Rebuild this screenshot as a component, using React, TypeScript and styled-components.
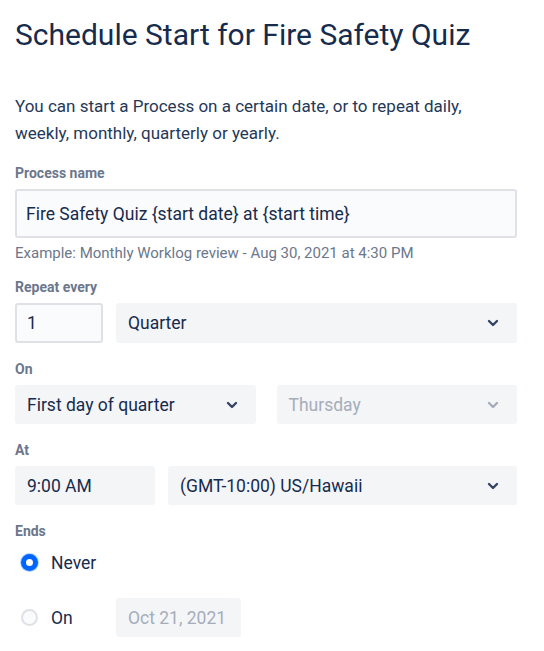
import styled, { createGlobalStyle } from 'styled-components';

const GlobalStyle = createGlobalStyle`
  body {
    margin: 0;
    background: #ffffff;
    font-family: Roboto, "Liberation Sans", sans-serif;
    color: #172b4d;
  }
`;

const Chevron = ({ disabled }: { disabled?: boolean }) => (
  <svg width="12" height="8" viewBox="0 0 12 8" aria-hidden>
    <path
      d="M2 2 L6 6 L10 2"
      fill="none"
      stroke={disabled ? '#a5adba' : '#344563'}
      strokeWidth="2.4"
      strokeLinecap="round"
      strokeLinejoin="round"
    />
  </svg>
);

const Select = ({ value, disabled }: { value: string; disabled?: boolean }) => (
  <SelectBox $disabled={disabled}>
    <span>{value}</span>
    <Chevron disabled={disabled} />
  </SelectBox>
);

const App = () => {
  return (
    <>
      <GlobalStyle />
      <Page>
        <Title>Schedule Start for Fire Safety Quiz</Title>
        <Description>
          You can start a Process on a certain date, or to repeat daily,
          weekly, monthly, quarterly or yearly.
        </Description>

        <Label>Process name</Label>
        <TextInput>Fire Safety Quiz {'{start date}'} at {'{start time}'}</TextInput>
        <Hint>Example: Monthly Worklog review - Aug 30, 2021 at 4:30 PM</Hint>

        <Label>Repeat every</Label>
        <Row $gap={13} $height={40}>
          <NumberInput>1</NumberInput>
          <Select value="Quarter" />
        </Row>

        <Label>On</Label>
        <Row $gap={21} $height={39}>
          <Select value="First day of quarter" />
          <Select value="Thursday" disabled />
        </Row>

        <Label>At</Label>
        <Row $gap={13} $height={39}>
          <TimeBox>9:00 AM</TimeBox>
          <Select value="(GMT-10:00) US/Hawaii" />
        </Row>

        <Label>Ends</Label>
        <RadioGroup>
          <RadioRow>
            <Radio $checked />
            <RadioText>Never</RadioText>
          </RadioRow>
          <RadioRow>
            <Radio />
            <RadioText>On</RadioText>
            <DateBox>Oct 21, 2021</DateBox>
          </RadioRow>
        </RadioGroup>
      </Page>
    </>
  );
};

export default App;

const Page = styled.div`
  width: 502px;
  padding: 0 15px 14px;
`;

const Title = styled.h1`
  margin: 0;
  padding-top: 17px;
  font-size: 30px;
  font-weight: 400;
  line-height: 36px;
  color: #172b4d;
`;

const Description = styled.p`
  max-width: 470px;
  margin: 40px 0 0;
  font-size: 17px;
  line-height: 27px;
  color: #253858;
`;

const Label = styled.div`
  margin: 18px 0 8px;
  font-size: 14px;
  font-weight: 700;
  line-height: 16px;
  color: #6b778c;
`;

const TextInput = styled.div`
  box-sizing: border-box;
  height: 49px;
  padding: 0 9px;
  display: flex;
  align-items: center;
  background: #fafbfc;
  border: 2px solid #dfe1e6;
  border-radius: 3px;
  font-size: 17.5px;
  color: #172b4d;
`;

const Hint = styled.div`
  margin-top: 6px;
  margin-bottom: -1px;
  font-size: 15px;
  line-height: 18px;
  color: #6b778c;
`;

const Row = styled.div<{ $gap: number; $height: number }>`
  display: flex;
  gap: ${(p) => p.$gap}px;
  height: ${(p) => p.$height}px;
`;

const Field = styled.div`
  box-sizing: border-box;
  height: 100%;
  display: flex;
  align-items: center;
  border-radius: 3px;
  font-size: 17.5px;
  color: #172b4d;
`;

const NumberInput = styled(Field)`
  width: 88px;
  flex: none;
  padding: 0 10px;
  background: #fafbfc;
  border: 2px solid #dfe1e6;
`;

const SelectBox = styled(Field)<{ $disabled?: boolean }>`
  flex: 1 1 0;
  padding: 0 18px 0 12px;
  justify-content: space-between;
  background: #f4f5f7;
  color: ${(p) => (p.$disabled ? '#a5adba' : '#172b4d')};
`;

const TimeBox = styled(Field)`
  width: 140px;
  flex: none;
  padding: 0 12px;
  background: #f4f5f7;
`;

const RadioGroup = styled.div`
  display: flex;
  flex-direction: column;
  gap: 16px;
  margin-top: -4px;
`;

const RadioRow = styled.div`
  display: flex;
  align-items: center;
  height: 39px;
  padding-left: 6px;
`;

const Radio = styled.span<{ $checked?: boolean }>`
  box-sizing: border-box;
  width: 17px;
  height: 17px;
  border-radius: 50%;
  flex: none;
  background: ${(p) => (p.$checked ? '#ffffff' : '#fafbfc')};
  border: ${(p) => (p.$checked ? '5.5px solid #0065ff' : '2px solid #dfe1e6')};
  box-shadow: ${(p) => (p.$checked ? '0 0 0 1px rgba(76,154,255,0.45)' : 'none')};
`;

const RadioText = styled.span`
  margin-left: 13px;
  width: 65px;
  font-size: 17.5px;
  color: #172b4d;
`;

const DateBox = styled(Field)`
  width: 125px;
  padding: 0 12px;
  background: #f4f5f7;
  color: #a5adba;
`;
